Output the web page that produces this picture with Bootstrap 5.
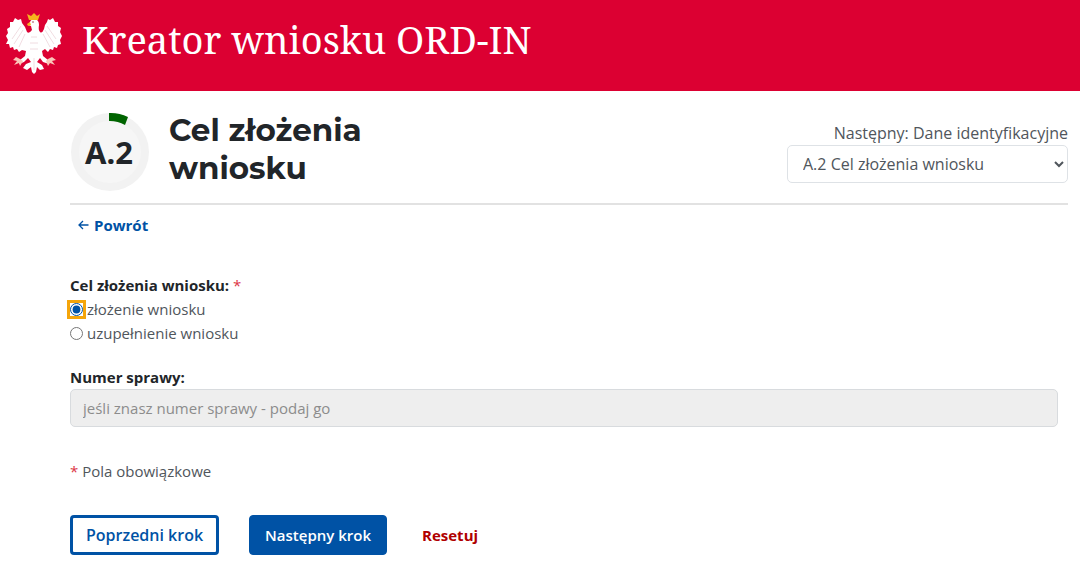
<!DOCTYPE html>
<html lang="pl">
<head>
<meta charset="utf-8">
<meta name="viewport" content="width=device-width, initial-scale=1">
<title>Kreator wniosku ORD-IN</title>
<link href="https://cdn.jsdelivr.net/npm/bootstrap@5.3.0/dist/css/bootstrap.min.css" rel="stylesheet">
<style>
body { font-family: "Open Sans", "Noto Sans", sans-serif; font-size: 15px; line-height: 24px; color: #50565c; background: #fff; }
.app-header { background: #dc0032; padding: 12px 6px 17px; gap: 20px; }
.app-title { font-family: "Noto Serif", serif; font-size: 38px; line-height: 54px; color: #fff; font-weight: 400; }
.page { padding: 20px 12px 11px 70px; }
.step-ring { width: 80px; height: 80px; }
.step-ring text { font: 700 31px "Noto Sans", sans-serif; fill: #212529; }
.step-head { border-bottom: 2px solid #e2e2e2; padding-bottom: 12px; }
.step-title { font-family: Montserrat, Lato, sans-serif; font-weight: 700; font-size: 31px; line-height: 38px; color: #212529; max-width: 240px; padding-left: 3px; }
.step-nav { width: 281px; padding-top: 10px; }
.next-step { font-size: 16px; white-space: nowrap; }
.step-nav select, .case-number { width: 100%; height: 38px; font: inherit; border-radius: 5px; }
.step-nav select { font-size: 16px; border: 1px solid #dee2e6; background: #fff; color: #50565c; padding: 0 0 0 11px; }
.back-link { color: #0052a5; font-weight: 700; text-decoration: none; gap: 5px; }
.form-body { padding: 20px 10px 0 0; }
.field-label { font-size: 15px; line-height: 24px; font-weight: 700; color: #212529; }
.required-mark { color: #dc3545; }
.choice { height: 24px; gap: 4px; }
.choice input { width: 13px; height: 13px; margin: 0; accent-color: #0052a5; }
.choice input:checked { outline: 3px solid #f5a50a; background: #f5a50a; }
.case-number { border: 1px solid #d8dbde; background: #eee; padding: 0 12px; }
.case-number::placeholder { color: #8c8c8c; opacity: 1; }
.btn-step { height: 40px; font-size: 15px; line-height: 20px; font-weight: 600; border-radius: 4px; border: 1px solid #0052a5; }
.btn-prev { border-width: 3px; background: #fff; color: #0052a5; padding: 0 13px; font-size: 16px; }
.btn-next { background: #0052a5; color: #fff; padding: 0 15px; margin: 0 35px 0 30px; }
.btn-reset { border: 0; background: none; color: #b00000; padding: 0; font-weight: 700; }
</style>
</head>
<body>
<header class="app-header d-flex align-items-start">
  <svg width="56" height="62" viewBox="0 0 56 62" role="img" aria-label="Godło Polski">
    <path fill="#fff" d="M24 10 Q25 7 29 7 Q33 8 33 13 Q32 18 34 20 Q36 22 38 17 L39 13 L41 10 L42 7 L44 8 L47 6 L49 10 L52 10 L52 14 L55 16 L54 20 L56 24 L54 28 L55 32 L52 33 L51 36 L48 35 L47 38 L44 37 L42 40 L39 37 L36 39 L37 44 L42 48 L43 52 L37 50 L34 46 L31 50 L36 53 L38 57 L34 58 L31 55 L30 60 L28 62 L26 60 L25 55 L21 58 L17 56 L20 52 L25 50 L22 46 L18 50 L13 52 L14 48 L19 44 L20 39 L16 38 L13 40 L11 37 L8 38 L7 35 L4 36 L3 32 L0 32 L2 28 L0 24 L2 21 L1 17 L4 15 L4 10 L7 10 L9 6 L12 8 L15 7 L16 11 L19 15 L21 20 Q23 22 26 18 L25 14 L22 13 Z"/>
    <g fill="none" stroke="#ecd3d9" stroke-width=".8">
      <path d="M15 14 L6 27 M17 18 L8 32 M19 22 L13 35 M41 14 L50 27 M39 18 L48 32 M37 22 L44 35"/>
      <path d="M25 25 L31 25 M24 31 L32 31 M24 37 L32 37 M28 46 V58"/>
    </g>
    <path d="M23 8 L21 2 L25 4 L28 1 L31 4 L34 2 L32 8 Z M24 10 L21 12 L22 14 L25 13 Z" fill="#f6b51e"/>
    <path d="M14 47 L10 45 L7 48 L11 49 L8 53 L13 51 L14 54 L17 49 Z M42 47 L46 45 L50 48 L46 49 L49 53 L44 51 L42 54 L40 49 Z" fill="#fac6b9"/>
    <circle cx="27" cy="10" r=".8" fill="#963647"/>
  </svg>
  <h1 class="app-title mb-0">Kreator wniosku ORD-IN</h1>
</header>
<main class="page">
  <div class="step-head d-flex justify-content-between">
    <div class="d-flex">
      <svg class="step-ring flex-shrink-0" viewBox="0 0 80 80" role="img" aria-label="Krok A.2">
        <circle cx="40" cy="41" r="39" fill="#f2f2f2"/>
        <circle cx="40" cy="41" r="31" fill="#f6f6f6"/>
        <path d="M39 2 A39 39 0 0 1 58 6 L55 14 A31 31 0 0 0 39 10 Z" fill="#006400"/>
        <text x="39" y="53" text-anchor="middle">A.2</text>
      </svg>
      <h2 class="step-title mb-0 ms-3">Cel złożenia wniosku</h2>
    </div>
    <div class="step-nav text-end">
      <label class="next-step" for="step">Następny: Dane identyfikacyjne</label>
      <select id="step"><option>A.2 Cel złożenia wniosku</option></select>
    </div>
  </div>
  <a class="back-link d-inline-flex align-items-center ms-2 mt-2" href="#">
    <svg width="11" height="10" viewBox="0 0 11 10" fill="none" stroke="currentColor" stroke-width="1.3" aria-hidden="true"><path d="M10.5 5 H1.5 M5 1 L1 5 L5 9"/></svg>
    Powrót
  </a>
  <form class="form-body mt-3">
    <fieldset class="mb-3 pb-1">
      <legend class="field-label mb-0">Cel złożenia wniosku: <span class="required-mark fw-normal">*</span></legend>
      <div class="choice d-flex align-items-center"><input type="radio" name="purpose" id="submit-new" checked><label for="submit-new">złożenie wniosku</label></div>
      <div class="choice d-flex align-items-center"><input type="radio" name="purpose" id="supplement"><label for="supplement">uzupełnienie wniosku</label></div>
    </fieldset>
    <label class="field-label" for="case-number">Numer sprawy:</label>
    <input class="case-number" type="text" id="case-number" placeholder="jeśli znasz numer sprawy - podaj go" disabled>
    <p class="mt-4 mb-4 pt-2 pb-1"><span class="required-mark">*</span> Pola obowiązkowe</p>
    <div class="d-flex align-items-center pt-1">
      <button class="btn-step btn-prev" type="button">Poprzedni krok</button>
      <button class="btn-step btn-next" type="button">Następny krok</button>
      <button class="btn-step btn-reset" type="button">Resetuj</button>
    </div>
  </form>
</main>
<script src="https://cdn.jsdelivr.net/npm/bootstrap@5.3.0/dist/js/bootstrap.bundle.min.js"></script>
</body>
</html>
